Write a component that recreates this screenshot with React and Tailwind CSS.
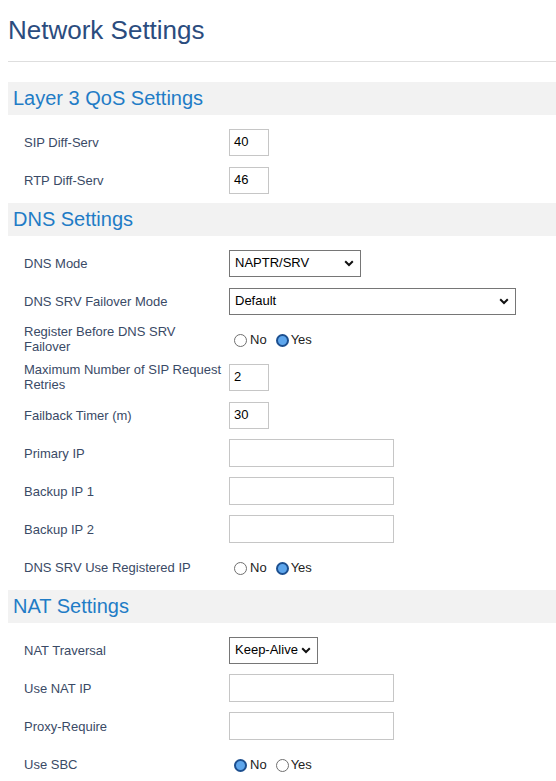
import React from "react";

const Chevron = () => (
  <svg width="10" height="7" viewBox="0 0 10 7" className="shrink-0">
    <path d="M1.2 1.3 L5 5 L8.8 1.3" fill="none" stroke="#111" strokeWidth="2" />
  </svg>
);

const Select = ({ value, w }) => (
  <div className={`${w} h-[27px] border border-[#767676] bg-white flex items-center justify-between pl-[5px] pr-[6px] text-[13px] text-black`}>
    <span className="whitespace-nowrap">{value}</span>
    <Chevron />
  </div>
);

const TextInput = ({ value = "", w = "w-[40px]", h = "h-[27px]" }) => (
  <div className={`${w} ${h} border border-[#c6c6c6] bg-white flex items-center pl-[4px] text-[13px] text-black`}>
    {value}
  </div>
);

const Radio = ({ checked }) =>
  checked ? (
    <span className="inline-block w-[13px] h-[13px] rounded-full border-[2px] border-[#1c4f8f] bg-[#5ea6ec]" />
  ) : (
    <span className="inline-block w-[13px] h-[13px] rounded-full border border-[#6f6f6f] bg-white" />
  );

const YesNo = ({ yes }) => (
  <div className="flex items-center text-[13px] text-[#222] pl-[5px] pt-[2px]">
    <Radio checked={!yes} />
    <span className="ml-[3px]">No</span>
    <span className="ml-[9px] flex items-center">
      <Radio checked={yes} />
    </span>
    <span className="ml-[2px]">Yes</span>
  </div>
);

const Row = ({ label, children }) => (
  <div className="flex items-center h-[38px] pl-[16px]">
    <div className="w-[205px] pr-[4px] text-[13px] leading-[15px] text-[#3a4a66]">{label}</div>
    <div>{children}</div>
  </div>
);

const Header = ({ children }) => (
  <div className="h-[33px] bg-[#f2f2f2] pl-[5px] text-[20px] leading-[33px] text-[#1f7cc6]">{children}</div>
);

export default function App() {
  return (
    <div className="min-h-[781px] bg-white pl-[8px] pt-[15px]" style={{ fontFamily: '"Liberation Sans", Arial, sans-serif' }}>
      <h1 className="text-[26px] leading-[30px] text-[#2b4c7e] font-normal">Network Settings</h1>
      <div className="mt-[16px] h-px bg-[#dedede]" />

      <div className="mt-[20px]">
        <Header>Layer 3 QoS Settings</Header>
        <div className="pt-[8px] pb-[4px]">
          <Row label="SIP Diff-Serv"><TextInput value="40" /></Row>
          <Row label="RTP Diff-Serv"><TextInput value="46" /></Row>
        </div>
      </div>

      <div>
        <Header>DNS Settings</Header>
        <div className="pt-[8px] pb-[4px]">
          <Row label="DNS Mode"><Select value="NAPTR/SRV" w="w-[132px]" /></Row>
          <Row label="DNS SRV Failover Mode"><Select value="Default" w="w-[287px]" /></Row>
          <Row label="Register Before DNS SRV Failover"><YesNo yes /></Row>
          <Row label="Maximum Number of SIP Request Retries"><TextInput value="2" /></Row>
          <Row label="Failback Timer (m)"><TextInput value="30" /></Row>
          <Row label="Primary IP"><TextInput w="w-[165px]" h="h-[28px]" /></Row>
          <Row label="Backup IP 1"><TextInput w="w-[165px]" h="h-[28px]" /></Row>
          <Row label="Backup IP 2"><TextInput w="w-[165px]" h="h-[28px]" /></Row>
          <Row label="DNS SRV Use Registered IP"><YesNo yes /></Row>
        </div>
      </div>

      <div>
        <Header>NAT Settings</Header>
        <div className="pt-[8px]">
          <Row label="NAT Traversal"><Select value="Keep-Alive" w="w-[89px]" /></Row>
          <Row label="Use NAT IP"><TextInput w="w-[165px]" h="h-[28px]" /></Row>
          <Row label="Proxy-Require"><TextInput w="w-[165px]" h="h-[28px]" /></Row>
          <Row label="Use SBC"><YesNo yes={false} /></Row>
        </div>
      </div>
    </div>
  );
}
